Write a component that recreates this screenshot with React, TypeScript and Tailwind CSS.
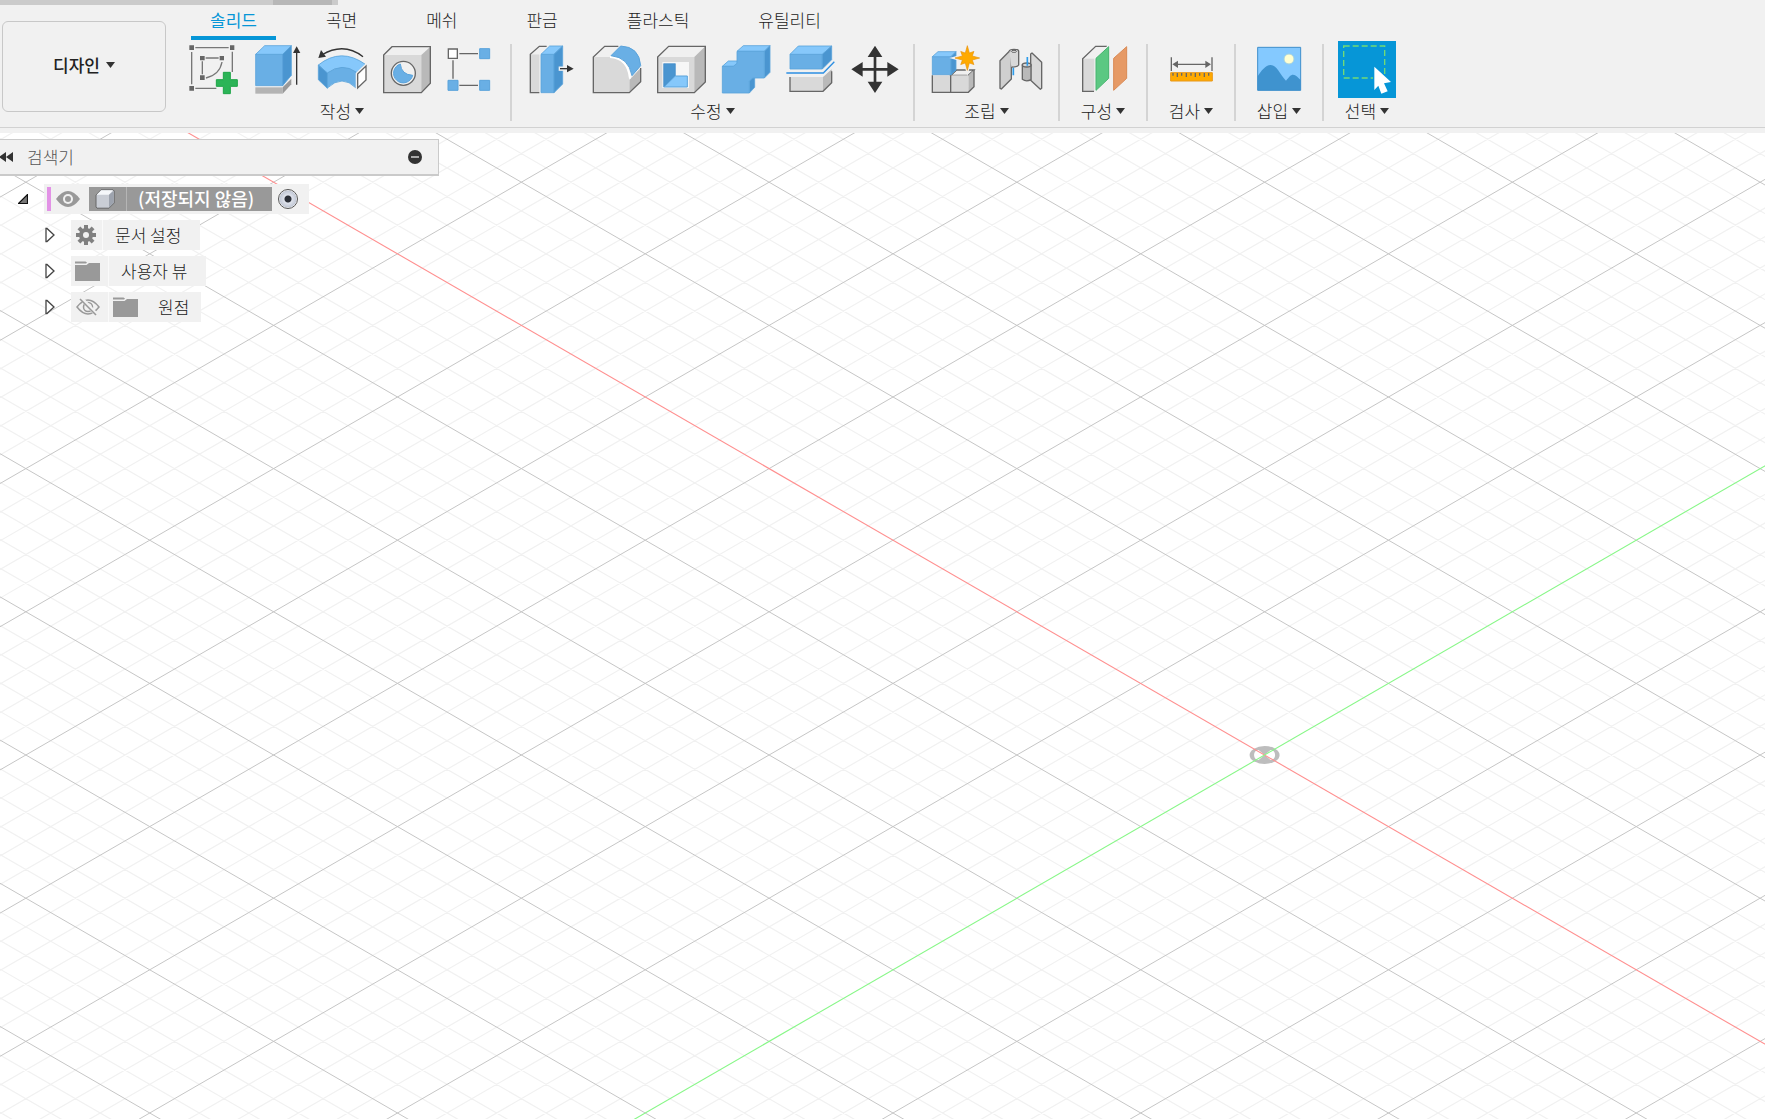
import React, { useState } from "react";

const BLUE = "#69afe5";
const BLUE_TOP = "#86c8fb";
const BLUE_SIDE = "#4a95d0";
const EDGE = "#5aa3db";
const LINE = "#666666";
const FACE = "#d9d9d9";
const LIGHT = "#f0f0f0";
const SHADE = "#b9b9b9";
const INK = "#333333";
const PAPER = "#f1f1f1";

function Icon({ children }: { children: React.ReactNode }) {
  return (
    <svg viewBox="0 0 150 150" className="block size-[50px] overflow-visible" aria-hidden="true">
      {children}
    </svg>
  );
}

function SketchIcon() {
  return (
    <Icon>
      <g stroke="#777" strokeWidth="4" fill="none">
        <path d="M25 11H125M14 24V121M136 23V84M25 133H88M56 42H95M46 52V91M105 54Q98 92 57 102" />
      </g>
      <path fill={LINE} d="M7 4h14v14H7zM129 4h13v14h-13zM7 126h14v14H7zM39 36h14v13H39zM98 36h13v13H98zM39 94h14v14H39z" />
      <path d="M109 85h21v22h21v20h-21v22h-21v-22H88v-20h21z" fill="#2cb457" stroke="#1fa548" strokeWidth="3" />
    </Icon>
  );
}

function ExtrudeIcon() {
  return (
    <Icon>
      <path fill="#b4b4b4" d="M10 130H92V149H10z" />
      <path fill="#999" d="M92 130L118 104V121L92 149z" />
      <g stroke={EDGE} strokeWidth="2.5">
        <path fill={BLUE} d="M11 31H92V125H11z" />
        <path fill={BLUE_TOP} d="M11 31L38 5H118L92 31z" />
        <path fill={BLUE_SIDE} d="M92 31L118 5V94L92 125z" />
      </g>
      <path d="M134 20V122" stroke={INK} strokeWidth="4" />
      <path d="M134 7L145 27H123z" fill={INK} />
    </Icon>
  );
}

function BendIcon() {
  return (
    <Icon>
      <path d="M138 38Q80 -7 14 33" fill="none" stroke={INK} strokeWidth="4" />
      <path d="M4 42L12 18L27 38z" fill={INK} />
      <g stroke={EDGE} strokeWidth="2.5">
        <path fill={BLUE_TOP} d="M4 63Q72 9 145 61L120 86Q76 55 31 87z" />
        <path fill={BLUE} d="M31 87Q76 55 117 84V132Q76 90 31 132z" />
        <path fill={BLUE_SIDE} d="M4 63L31 87V133L4 107z" />
      </g>
      <path d="M122 90L147 66V108L122 132z" fill="#fff" stroke={PAPER} strokeWidth="12" />
      <path d="M122 90L147 66V108L122 132z" fill="#fff" stroke={LINE} strokeWidth="4" />
    </Icon>
  );
}

function HoleIcon() {
  return (
    <Icon>
      <path fill={LIGHT} d="M5 33L30 8H145L118 33z" />
      <path fill={FACE} d="M5 33H118V146H5z" />
      <path fill={SHADE} d="M118 33L145 8V118L118 146z" />
      <path fill="none" stroke={LINE} strokeWidth="4" d="M5 33L30 8H145V118L118 146H5z" />
      <circle cx="64" cy="88" r="36" fill={LIGHT} stroke={LINE} strokeWidth="4" />
      <path d="M55 60Q58 92 92 94A29 29 0 1 1 55 60z" fill={BLUE} stroke={EDGE} strokeWidth="3" />
    </Icon>
  );
}

function PatternIcon() {
  return (
    <Icon>
      <path d="M37 29H93M18 49V104M37 124H93" stroke={LINE} strokeWidth="4" />
      <path d="M4 15h27v28H4z" fill="#fff" stroke={LINE} strokeWidth="4" />
      <path d="M98 14h30v30H98zM3 109h30v30H3zM98 109h30v30H98z" fill={BLUE} stroke={EDGE} strokeWidth="3" />
    </Icon>
  );
}

function PressPullIcon() {
  return (
    <Icon>
      <path fill={FACE} d="M16 31H43V146H16z" />
      <path fill={LIGHT} d="M16 31L43 7H66L43 31z" />
      <path d="M43 146H16V31L43 7H65" fill="none" stroke={LINE} strokeWidth="4" />
      <g stroke={EDGE} strokeWidth="2.5">
        <path fill={BLUE} d="M48 31H87V146H48z" />
        <path fill={BLUE_TOP} d="M48 31L74 6H113L87 31z" />
        <path fill={BLUE_SIDE} d="M87 31L113 6V120L87 146z" />
      </g>
      <path d="M101 74H130" stroke={PAPER} strokeWidth="13" />
      <path d="M105 74H130" stroke={INK} strokeWidth="4" />
      <path d="M146 74L126 63V85z" fill={INK} />
    </Icon>
  );
}

function FilletIcon() {
  return (
    <Icon>
      <path fill={LIGHT} d="M10 39L44 7H86L60 39z" />
      <path fill={SHADE} d="M118 108L152 72V113L118 146z" />
      <path fill={FACE} d="M10 39H60Q112 42 118 105V146H10z" />
      <path d="M85 7H44L10 39V146H118L152 113V72" fill="none" stroke={LINE} strokeWidth="4" />
      <path d="M60 39Q114 42 120 104" fill="none" stroke="#fff" strokeWidth="6" />
      <path d="M63 35L92 6Q148 8 152 65L126 95Q116 40 63 35z" fill={BLUE} stroke={EDGE} strokeWidth="3" />
    </Icon>
  );
}

function ShellIcon() {
  return (
    <Icon>
      <path fill={LIGHT} d="M8 39L41 7H151L118 39z" />
      <path fill={FACE} d="M8 39H118V146H8z" />
      <path fill={SHADE} d="M118 39L151 7V114L118 146z" />
      <path fill="none" stroke={LINE} strokeWidth="4" d="M8 39L41 7H151V114L118 146H8z" />
      <path fill="#f6f6f6" d="M22 54H102V132H22z" />
      <path fill={BLUE_SIDE} stroke="#3f8bc8" strokeWidth="2" d="M26 59H61V95L26 129z" />
      <path fill={BLUE_TOP} stroke={EDGE} strokeWidth="3" d="M27 129L61 96H97V129z" />
    </Icon>
  );
}

function CombineIcon() {
  return (
    <Icon>
      <g stroke={EDGE} strokeWidth="2.5">
        <path fill={BLUE_TOP} d="M51 22L70 5H150L133 22zM7 67L25 51H52V67z" />
        <path fill={BLUE_SIDE} d="M133 22L150 5V85L133 102zM88 147L104 130V102H88z" />
        <path fill={BLUE} d="M7 67H40L51 58V22H133V102H98L88 112V147H7z" />
      </g>
    </Icon>
  );
}

function SplitIcon() {
  return (
    <Icon>
      <g stroke={EDGE} strokeWidth="2.5">
        <path fill={BLUE} d="M15 31H112V75H15z" />
        <path fill={BLUE_TOP} d="M15 31L40 6H140L112 31z" />
        <path fill={BLUE_SIDE} d="M112 31L140 6V47L112 75z" />
      </g>
      <path fill={FACE} d="M15 99H114V142H15z" />
      <path fill={SHADE} d="M114 99L140 76V116L114 142z" />
      <path d="M15 99V142H114L140 116V82" fill="none" stroke={LINE} strokeWidth="4" />
      <path d="M4 87H115L148 53" fill="none" stroke={PAPER} strokeWidth="14" />
      <path d="M4 87H115L148 53" fill="none" stroke="#2d8fe2" strokeWidth="4" />
    </Icon>
  );
}

function MoveIcon() {
  return (
    <Icon>
      <path d="M75 30V122M30 76H120" stroke={INK} strokeWidth="8" />
      <path d="M75 5L97 39H53zM75 147L97 113H53zM4 76L38 54V98zM146 76L112 54V98z" fill={INK} />
    </Icon>
  );
}

function ComponentIcon() {
  const star = Array.from({ length: 16 }, (_, i) => {
    const radius = i % 2 ? 16 : i % 4 ? 28 : 37;
    const angle = (i * Math.PI) / 8;
    return `${115 + radius * Math.sin(angle)},${42 - radius * Math.cos(angle)}`;
  }).join(" ");
  return (
    <Icon>
      <g stroke={LINE} strokeWidth="4">
        <path fill={LIGHT} d="M65 94L82 78H135L118 94z" />
        <path fill={SHADE} stroke="none" d="M118 94L135 78V128L118 145z" />
        <path fill={FACE} stroke="none" d="M10 94H118V145H10z" />
        <path fill="none" d="M10 94V145H118L135 128V78M65 94V145M65 94L82 78" />
      </g>
      <g stroke={EDGE} strokeWidth="2.5">
        <path fill={BLUE} d="M10 38H66V92H10z" />
        <path fill={BLUE_TOP} d="M10 38L27 23H81L66 38z" />
        <path fill={BLUE_SIDE} d="M66 38L81 23V78L66 92z" />
      </g>
      <polygon points={star} fill={PAPER} stroke={PAPER} strokeWidth="9" />
      <polygon points={star} fill="#ffaa00" stroke="#e8920c" strokeWidth="2" />
    </Icon>
  );
}

function JointIcon() {
  return (
    <Icon>
      <g stroke={LINE} strokeWidth="4" strokeLinejoin="round">
        <path fill="#cfcfcf" d="M18 50L46 22L52 28V105L22 135L18 133z" />
        <path fill={FACE} stroke="none" d="M46 22H74V64Q68 70 52 69z" />
        <path fill="none" d="M46 22A14 6 0 0 1 74 22V63Q70 70 53 69" />
        <ellipse cx="60" cy="22" rx="8" ry="3" fill={LIGHT} strokeWidth="3" />
        <path fill={FACE} d="M110 30L114 27L143 55V133L139 136L110 109z" />
        <path fill={SHADE} d="M85 62V106Q97 115 111 107V62z" />
        <ellipse cx="98" cy="63" rx="13" ry="6" fill={FACE} />
      </g>
      <path d="M58 71V94M100 39V65" stroke="#2d9bea" strokeWidth="5" />
    </Icon>
  );
}

function ConstructIcon() {
  return (
    <Icon>
      <path fill={LIGHT} d="M14 44L53 7H87L50 44z" />
      <path fill={FACE} d="M14 44H50V142H14z" />
      <path d="M48 142H14V44L53 7H87" fill="none" stroke={LINE} strokeWidth="4" />
      <path d="M54 43L93 7V103L54 140z" fill="#5fc986" stroke={PAPER} strokeWidth="9" />
      <path d="M54 43L92 8V103L54 139z" fill="#5bc882" stroke="#45b46e" strokeWidth="3" />
      <path d="M107 43L146 8V103L107 139z" fill="#e69a66" stroke="#d98a55" strokeWidth="3" />
    </Icon>
  );
}

function MeasureIcon() {
  return (
    <Icon>
      <path d="M16 40V81M138 40V81M30 61H124" stroke={LINE} strokeWidth="4" />
      <path d="M19 61L36 50V72zM135 61L118 50V72z" fill={LINE} />
      <path d="M14 86H139V111H14z" fill="#ffaa00" stroke="#e8981a" strokeWidth="3" />
      <path d="M21 87v8M34 87v12M47 87v8M61 87v12M75 87v8M88 87v12M101 87v8M115 87v12M128 87v8" stroke={LINE} strokeWidth="4" />
    </Icon>
  );
}

function PictureIcon() {
  return (
    <Icon>
      <path d="M11 10H140V139H11z" fill="#84c9ff" />
      <path d="M11 97C22 80 34 64 50 63C70 64 78 92 96 110C106 98 110 92 117 92C126 92 132 100 140 108V139H11z" fill="#3f93cf" />
      <path d="M11 10H140V139H11z" fill="none" stroke="#3f8fcb" strokeWidth="3" />
      <circle cx="105" cy="45" r="15" fill="#ffffd2" stroke="#a6d2dc" strokeWidth="3" />
    </Icon>
  );
}

function SelectIcon() {
  return (
    <svg viewBox="0 0 174 171" className="block h-[57px] w-[58px]" aria-hidden="true">
      <path d="M17 15H140V111H17z" fill="none" stroke="#72da76" strokeWidth="4" strokeDasharray="18 9" />
      <path d="M109 77L159 123L138 127L149 151L130 158L121 134L109 147z" fill="#fff" stroke="#0696d7" strokeWidth="8" />
      <path d="M109 77L159 123L138 127L149 151L130 158L121 134L109 147z" fill="#fff" />
    </svg>
  );
}

function Caret() {
  return (
    <svg viewBox="0 0 9 6" className="h-[6px] w-[9px]" aria-hidden="true">
      <path d="M0 0H9L4.5 6z" fill={INK} />
    </svg>
  );
}

type Tool = { name: string; icon: React.ReactNode };
type Group = { label: string; pad: string; tools: Tool[] };

const groups: Group[] = [
  {
    label: "작성",
    pad: "px-[13px]",
    tools: [
      { name: "스케치 작성", icon: <SketchIcon /> },
      { name: "돌출", icon: <ExtrudeIcon /> },
      { name: "회전", icon: <BendIcon /> },
      { name: "구멍", icon: <HoleIcon /> },
      { name: "패턴", icon: <PatternIcon /> },
    ],
  },
  {
    label: "수정",
    pad: "px-[13px]",
    tools: [
      { name: "밀고 당기기", icon: <PressPullIcon /> },
      { name: "모깎기", icon: <FilletIcon /> },
      { name: "쉘", icon: <ShellIcon /> },
      { name: "결합", icon: <CombineIcon /> },
      { name: "분할", icon: <SplitIcon /> },
      { name: "이동", icon: <MoveIcon /> },
    ],
  },
  {
    label: "조립",
    pad: "px-[14px]",
    tools: [
      { name: "새 구성요소", icon: <ComponentIcon /> },
      { name: "접합", icon: <JointIcon /> },
    ],
  },
  { label: "구성", pad: "px-[18px]", tools: [{ name: "평면", icon: <ConstructIcon /> }] },
  { label: "검사", pad: "px-[18px]", tools: [{ name: "측정", icon: <MeasureIcon /> }] },
  { label: "삽입", pad: "px-[18px]", tools: [{ name: "캔버스", icon: <PictureIcon /> }] },
];

const tabs = ["솔리드", "곡면", "메쉬", "판금", "플라스틱", "유틸리티"];

function MenuLabel({ text }: { text: string }) {
  return (
    <button type="button" className="flex items-center gap-[4px] text-[17px] leading-[18px] whitespace-nowrap">
      {text}
      <Caret />
    </button>
  );
}

function Toolbar() {
  const [active, setActive] = useState(tabs[0]);
  return (
    <header className="shrink-0 bg-[#f1f1f1] pb-[5px]">
      <div className="flex h-[5px]">
        <div className="w-[273px] bg-[#cbcbcb]" />
        <div className="w-[59px] bg-[#b7b7b7]" />
        <div className="w-[6px] bg-[#cbcbcb]" />
      </div>
      <div className="flex items-start border-b border-[#d2d2d2] pb-[6px]">
        <button
          type="button"
          className="mt-[16px] ml-[2px] flex h-[91px] w-[164px] shrink-0 items-center justify-center gap-[6px] rounded-[6px] border border-[#c8c8c8] pb-[3px] text-[17px] leading-[18px] font-medium"
        >
          디자인
          <Caret />
        </button>
        <div className="ml-[8px]">
          <nav className="flex gap-[31px] pl-[17px]" role="tablist">
            {tabs.map((tab) => (
              <button
                key={tab}
                type="button"
                role="tab"
                aria-selected={tab === active}
                onClick={() => setActive(tab)}
                className={
                  tab === active
                    ? "h-[35px] border-b-4 border-[#0696d7] px-[19px] pb-[2px] text-[17px] leading-[18px] font-normal whitespace-nowrap text-[#0696d7]"
                    : "h-[35px] border-b-4 border-transparent px-[19px] pb-[2px] text-[17px] leading-[18px] whitespace-nowrap"
                }
              >
                {tab}
              </button>
            ))}
          </nav>
          <div className="mt-[4px] flex h-[77px]">
            {groups.map((group) => (
              <div
                key={group.label}
                className={`flex flex-col items-center justify-between border-r-2 border-[#d4d4d4] pb-[1px] ${group.pad}`}
              >
                <div className="flex gap-[15px]">
                  {group.tools.map((tool) => (
                    <button key={tool.name} type="button" aria-label={tool.name}>
                      {tool.icon}
                    </button>
                  ))}
                </div>
                <MenuLabel text={group.label} />
              </div>
            ))}
            <div className="flex flex-col items-center justify-between pb-[1px] pl-[14px]">
              <button type="button" aria-label="선택 도구" className="-mt-[3px] bg-[#0696d7]">
                <SelectIcon />
              </button>
              <MenuLabel text="선택" />
            </div>
          </div>
        </div>
      </div>
    </header>
  );
}

const ORIGIN = { x: 1264.6, y: 622 };
const SLOPE = 0.578;
const STEP = 28.64;

function Grid() {
  const steps = Array.from({ length: 161 }, (_, i) => i - 80);
  const line = (k: number, direction: number) => {
    const y = (x: number) => ORIGIN.y + k * STEP + direction * SLOPE * (x - ORIGIN.x);
    return `M0 ${y(0).toFixed(2)}L4000 ${y(4000).toFixed(2)}`;
  };
  const path = (list: number[]) => list.map((k) => line(k, 1) + line(k, -1)).join("");
  return (
    <svg className="absolute inset-0 size-full" aria-hidden="true">
      <path d={path(steps.filter((k) => k % 5 !== 0))} stroke="#f1f1f1" strokeWidth="1.2" fill="none" />
      <path d={path(steps.filter((k) => k % 5 === 0 && k !== 0))} stroke="#c6c6c6" strokeWidth="1" fill="none" />
      <g transform={`translate(${ORIGIN.x} ${ORIGIN.y})`}>
        <ellipse rx="15" ry="9" fill="#bdbdbd" />
        <path d="M0 0L-6 -5C-12 -5 -12 5 -6 5zM0 0L6 -5C12 -5 12 5 6 5z" fill="#fff" />
      </g>
      <path d={line(0, 1)} stroke="#ff8f8f" strokeWidth="1.1" />
      <path d={line(0, -1)} stroke="#88f788" strokeWidth="1.1" />
    </svg>
  );
}

function Expander() {
  return (
    <button type="button" aria-label="펼치기" className="mr-[15px] ml-[44px] flex w-[12px] justify-center">
      <svg viewBox="0 0 12 16" className="h-[16px] w-[12px]">
        <path d="M2 1.5H3L10 8L3 14.5H2z" fill="#fff" stroke="#444" strokeWidth="1.3" />
      </svg>
    </button>
  );
}

function FolderIcon() {
  return (
    <svg viewBox="0 0 25 20" className="h-[20px] w-[25px]" aria-hidden="true">
      <path d="M0 4H11.5L14 2H25V20H0z" fill="#999" />
      <path d="M0 0.4H10.5L12 1.4L11 2.4H0z" fill="#999" />
    </svg>
  );
}

function GearIcon() {
  return (
    <svg viewBox="-10 -10 20 20" className="size-[20px]" aria-hidden="true">
      <g fill="#808080">
        {[0, 45, 90, 135].map((a) => (
          <rect key={a} x="-2" y="-10" width="4" height="20" transform={`rotate(${a})`} />
        ))}
        <circle r="7" />
      </g>
      <circle r="3" fill="#f1f1f1" />
    </svg>
  );
}

function EyeIcon() {
  return (
    <svg viewBox="0 0 24 16" className="h-[16px] w-[24px]" aria-hidden="true">
      <path d="M0 8Q12 -8 24 8Q12 24 0 8z" fill="#999" />
      <circle cx="12" cy="8" r="5" fill="#f1f1f1" />
      <circle cx="12" cy="8" r="3" fill="#999" />
    </svg>
  );
}

function HiddenEyeIcon() {
  return (
    <svg viewBox="0 0 24 18" className="h-[18px] w-[24px]" aria-hidden="true">
      <g fill="none" stroke="#999" strokeWidth="1.5">
        <path d="M1 9Q12 -5 23 9Q12 23 1 9z" />
        <circle cx="12" cy="9" r="4.5" />
      </g>
      <path d="M5 0L21 17" stroke="#f1f1f1" strokeWidth="4" />
      <path d="M4 1L20 17" stroke="#999" strokeWidth="1.6" />
    </svg>
  );
}

function CubeIcon() {
  return (
    <svg viewBox="0 0 20 20" className="size-[20px]" aria-hidden="true">
      <path d="M1 6L6 0.8H18L19.2 2V14L14 19.2H2L1 18z" fill="#c9cdd5" stroke="#666" strokeWidth="1" />
      <path d="M1.6 5.8L6.2 1.3H18L14 5.8z" fill="#f5f7fa" />
      <path d="M14 5.8L18.6 2V14L14 18.6z" fill="#9da3ae" />
    </svg>
  );
}

function Browser() {
  return (
    <aside className="relative mt-[6px] w-[439px]">
      <div className="flex h-[37px] items-center border border-b-2 border-l-0 border-[#cacaca] bg-[#f1f1f1] pr-[16px]">
        <button type="button" aria-label="패널 접기">
          <svg viewBox="0 0 13 10" className="h-[10px] w-[13px]">
            <path d="M-1 5L6 0V10zM6 5L13 0V10z" fill={INK} />
          </svg>
        </button>
        <h2 className="ml-[14px] flex-1 text-[17px] leading-[18px] text-[#555]">검색기</h2>
        <button type="button" aria-label="패널 옵션">
          <svg viewBox="0 0 14 14" className="size-[14px]">
            <circle cx="7" cy="7" r="7" fill={INK} />
            <path d="M3 7H11" stroke="#aaa" strokeWidth="2" />
          </svg>
        </button>
      </div>

      <ul className="mt-[8px] flex flex-col gap-[6px] text-[17px] leading-[18px]">
        <li className="flex h-[30px] items-center">
          <button type="button" aria-label="접기" className="mr-[16px] ml-[18px]">
            <svg viewBox="0 0 10 10" className="size-[10px]">
              <path d="M0.5 9.5L9.5 0.5V9.5z" fill="#777" stroke="#111" strokeWidth="1.2" />
            </svg>
          </button>
          <div className="flex h-full items-center bg-[#f1f1f1] pr-[11px] pl-[3px]">
            <span className="h-[24px] w-[4px] bg-[#e292e6]" />
            <button type="button" aria-label="표시 전환" className="mr-[9px] ml-[5px]">
              <EyeIcon />
            </button>
            <div className="flex h-[24px] items-center bg-[#999] text-white">
              <span className="flex h-full w-[38px] items-center border-r border-[#b5b5b5] pl-[6px]">
                <CubeIcon />
              </span>
              <span className="w-[145px] pb-[2px] pl-[11px] text-[18px] font-medium whitespace-nowrap">
                (저장되지 않음)
              </span>
            </div>
            <input
              type="radio"
              name="activate"
              defaultChecked
              aria-label="구성요소 활성화"
              className="ml-[6px] size-[20px] appearance-none rounded-full border border-[#555] bg-[radial-gradient(circle,#2c3038_0_3px,#dfe3ec_4px,#c3c9d6_8px,#ffffff_9px)]"
            />
          </div>
        </li>
        <li className="flex h-[30px] items-center">
          <Expander />
          <span className="flex h-full w-[32px] items-center border-r border-[#fafafa] bg-[#f1f1f1] pl-[5px]">
            <GearIcon />
          </span>
          <span className="flex h-full items-center bg-[#f1f1f1] pr-[19px] pl-[12px]">문서 설정</span>
        </li>
        <li className="flex h-[30px] items-center">
          <Expander />
          <span className="flex h-full w-[38px] items-center border-r border-[#fafafa] bg-[#f1f1f1] pl-[4px]">
            <FolderIcon />
          </span>
          <span className="flex h-full items-center bg-[#f1f1f1] pr-[19px] pl-[12px]">사용자 뷰</span>
        </li>
        <li className="flex h-[30px] items-center">
          <Expander />
          <button
            type="button"
            aria-label="표시 전환"
            className="flex h-full w-[38px] items-center border-r border-[#fafafa] bg-[#f1f1f1] pl-[5px]"
          >
            <HiddenEyeIcon />
          </button>
          <span className="flex h-full items-center gap-[20px] bg-[#f1f1f1] pr-[12px] pl-[4px]">
            <FolderIcon />
            원점
          </span>
        </li>
      </ul>
    </aside>
  );
}

export default function App() {
  return (
    <div className="flex h-screen flex-col overflow-hidden bg-white font-['Noto_Sans_CJK_KR',sans-serif] font-light text-[#222]">
      <Toolbar />
      <main className="relative flex-1 overflow-hidden">
        <Grid />
        <Browser />
      </main>
    </div>
  );
}
